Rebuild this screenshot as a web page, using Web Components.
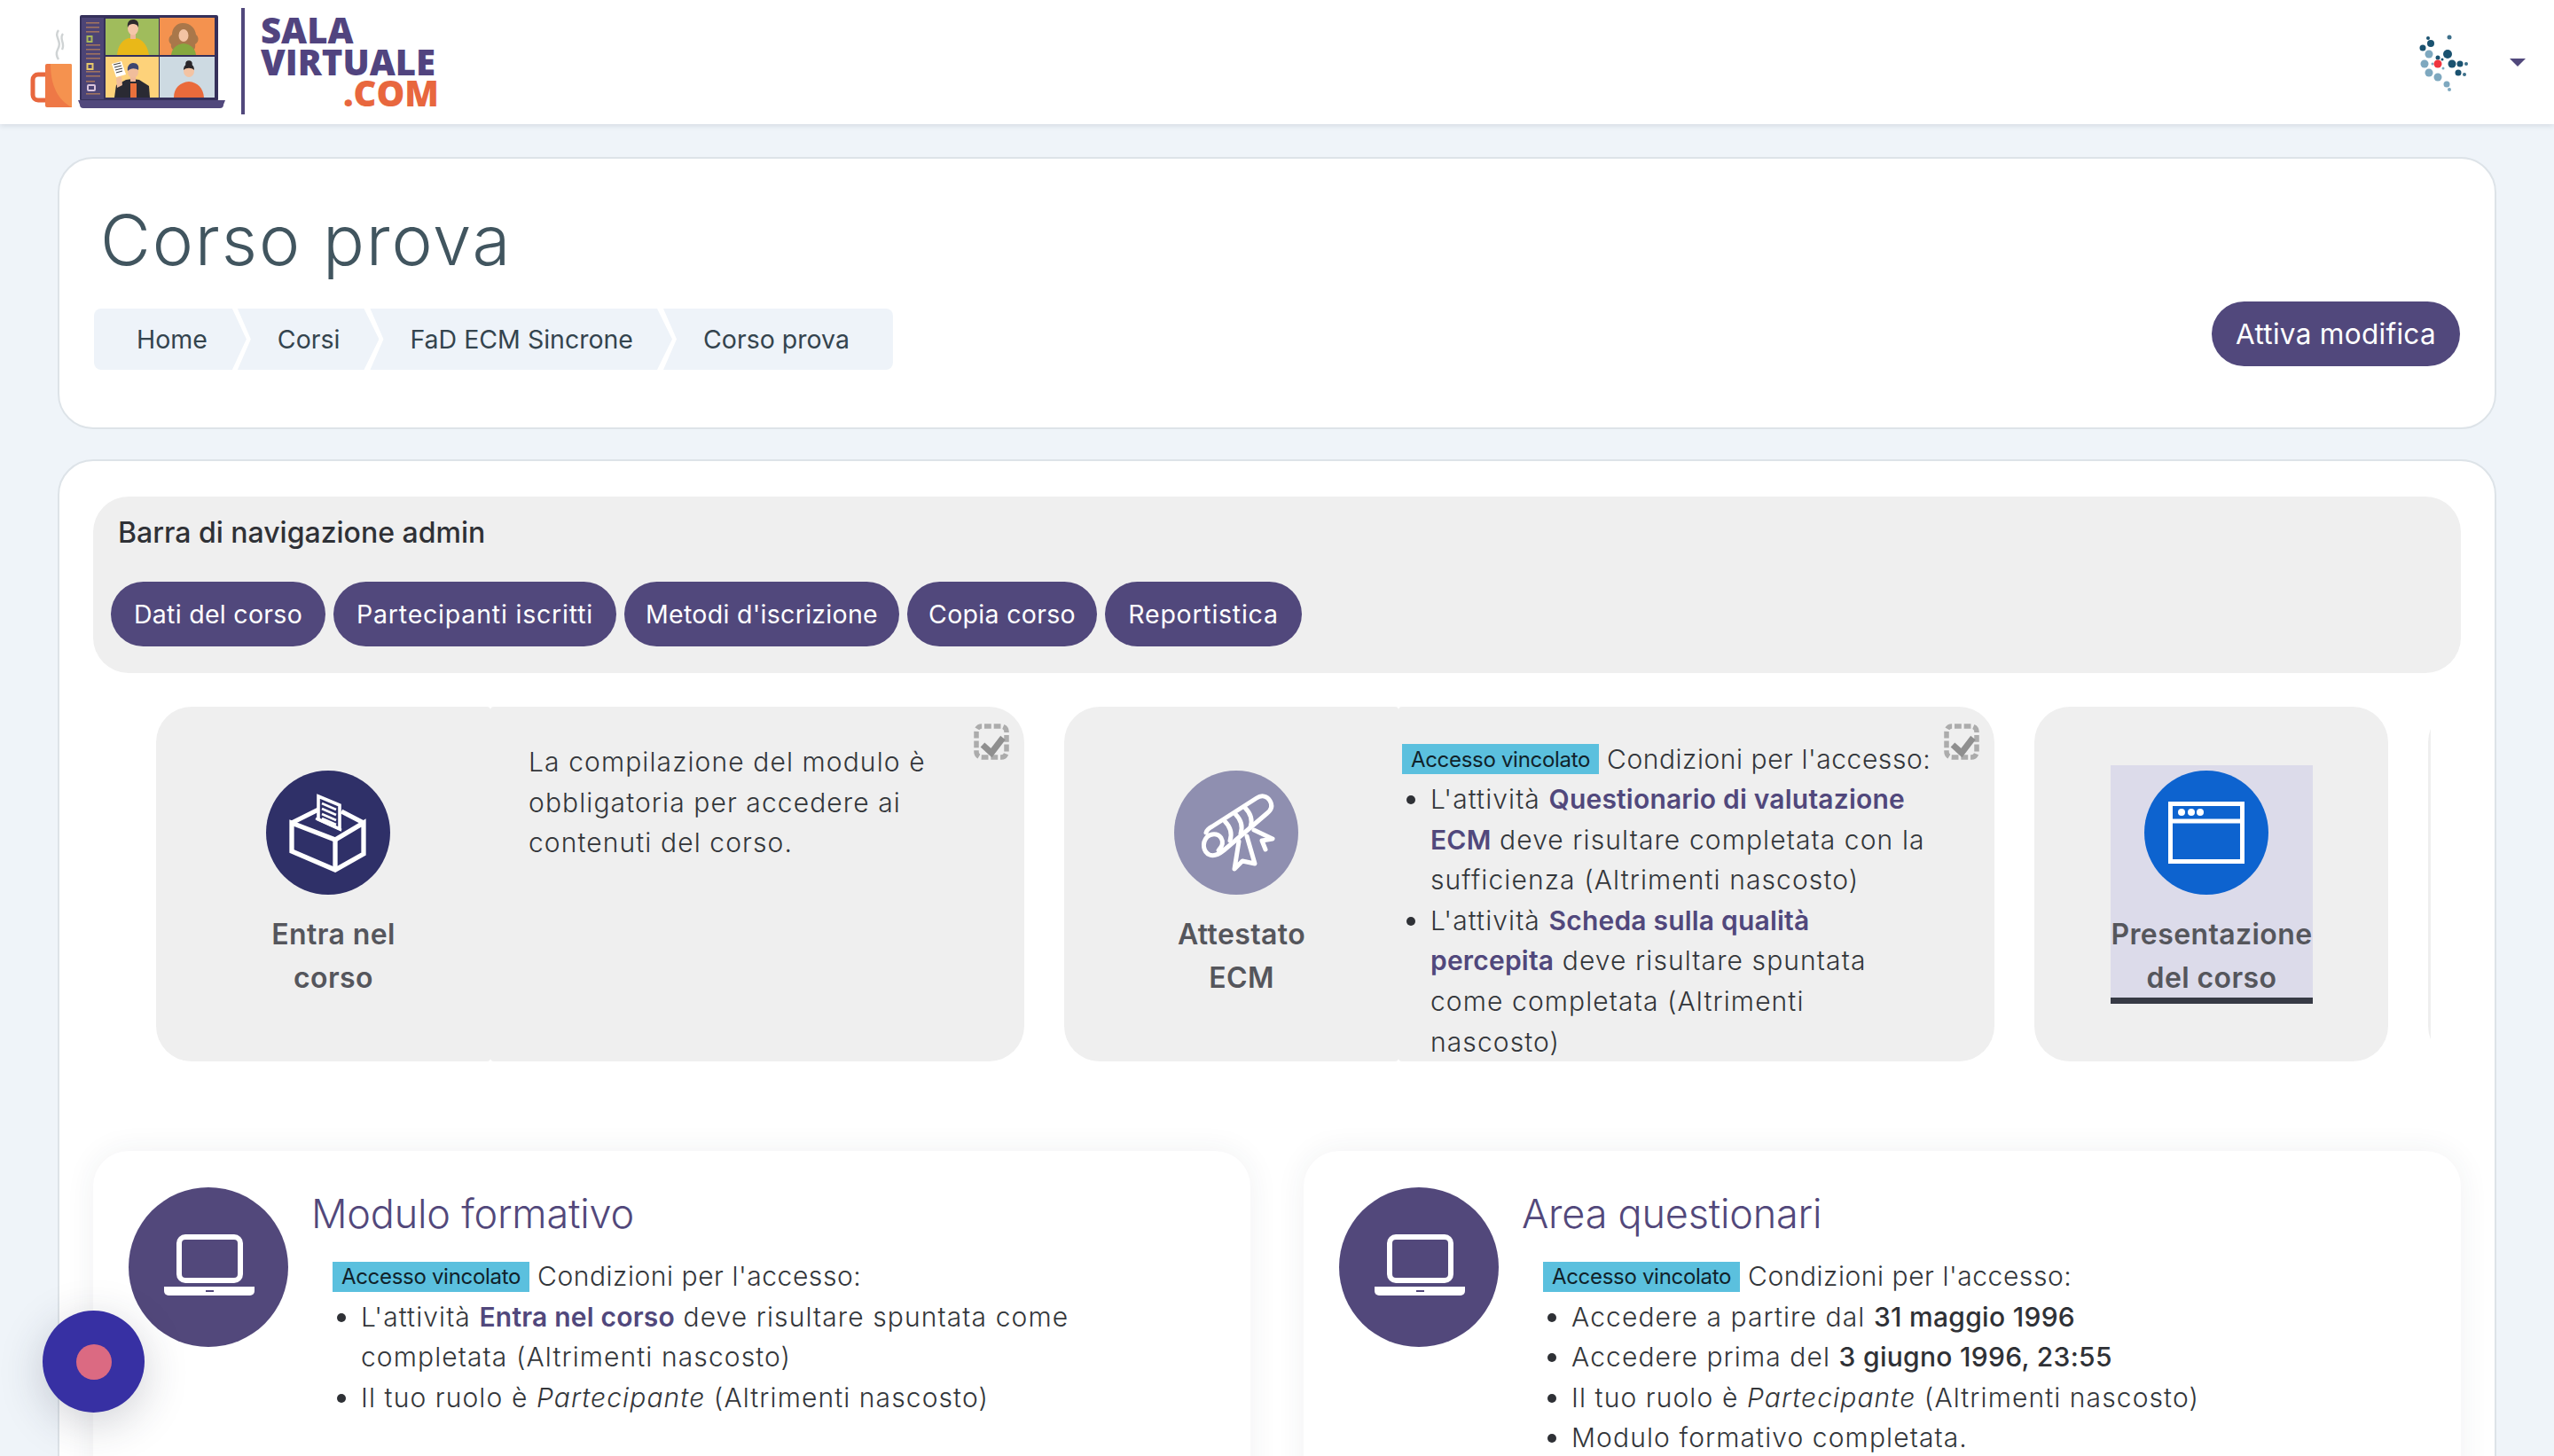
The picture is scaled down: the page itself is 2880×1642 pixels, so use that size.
<!DOCTYPE html>
<html lang="it">
<head>
<meta charset="utf-8">
<title>Corso prova</title>
<style>
  html, body { margin: 0; height: 1642px; overflow: hidden; background: #eff4f9; }
  body { font-family: Inter, "Noto Sans", sans-serif; font-size: 29.4px; color: #3b3e42; }
  sv-page { display: block; }
</style>
</head>
<body>
<sv-page>
  <sv-navbar slot="nav"></sv-navbar>

  <sv-panel slot="header" class="head">
    <sv-course-header title-text="Corso prova">
      <sv-crumb first>Home</sv-crumb>
      <sv-crumb>Corsi</sv-crumb>
      <sv-crumb>FaD ECM Sincrone</sv-crumb>
      <sv-crumb last>Corso prova</sv-crumb>
      <sv-pill slot="action" width="280" size="31.5">Attiva modifica</sv-pill>
    </sv-course-header>
  </sv-panel>

  <sv-panel slot="main">
    <sv-admin-bar heading="Barra di navigazione admin">
      <sv-pill width="242">Dati del corso</sv-pill>
      <sv-pill width="319" style="letter-spacing:.8px">Partecipanti iscritti</sv-pill>
      <sv-pill width="310">Metodi d'iscrizione</sv-pill>
      <sv-pill width="214">Copia corso</sv-pill>
      <sv-pill width="222" style="letter-spacing:.75px">Reportistica</sv-pill>
    </sv-admin-bar>

    <sv-activity-row>
      <sv-activity icon="box" color="#2f3068" width="979" check>
        <span slot="label">Entra nel<br>corso</span>
        <sv-note>La compilazione del modulo è<br>obbligatoria per accedere ai<br>contenuti del corso.</sv-note>
      </sv-activity>

      <sv-activity icon="diploma" color="#8f8fb0" width="1049" check text-pad="4">
        <span slot="label">Attestato<br>ECM</span>
        <sv-conditions>
          <sv-cond>L'attività <b>Questionario di valutazione<br>ECM</b> deve risultare completata con la<br>sufficienza (Altrimenti nascosto)</sv-cond>
          <sv-cond>L'attività <b>Scheda sulla qualità<br>percepita</b> deve risultare spuntata<br>come completata (Altrimenti<br>nascosto)</sv-cond>
        </sv-conditions>
      </sv-activity>

      <sv-activity icon="window" color="#0d63cf" width="399" active>
        <span slot="label">Presentazione<br>del corso</span>
      </sv-activity>

      <sv-activity icon="window" color="#0d63cf" width="399"></sv-activity>
    </sv-activity-row>

    <sv-section-grid>
      <sv-section-card heading="Modulo formativo">
        <sv-conditions>
          <sv-cond>L'attività <b>Entra nel corso</b> deve risultare spuntata come<br>completata (Altrimenti nascosto)</sv-cond>
          <sv-cond>Il tuo ruolo è <i>Partecipante</i> (Altrimenti nascosto)</sv-cond>
        </sv-conditions>
      </sv-section-card>
      <sv-section-card heading="Area questionari">
        <sv-conditions>
          <sv-cond plain>Accedere a partire dal <b>31 maggio 1996</b></sv-cond>
          <sv-cond plain>Accedere prima del <b>3 giugno 1996, 23:55</b></sv-cond>
          <sv-cond>Il tuo ruolo è <i>Partecipante</i> (Altrimenti nascosto)</sv-cond>
          <sv-cond>Modulo formativo completata.</sv-cond>
        </sv-conditions>
      </sv-section-card>
    </sv-section-grid>
  </sv-panel>
</sv-page>
<sv-fab></sv-fab>

<script>
class SvPage extends HTMLElement {
  constructor() {
    super();
    this.attachShadow({ mode: 'open' });
    this.shadowRoot.innerHTML = `
      <style>
        :host { display: block; }
        .stack { display: flex; flex-direction: column; gap: 34px; padding: 37px 65px 0; }
      </style>
      <slot name="nav"></slot>
      <div class="stack">
        <slot name="header"></slot>
        <slot name="main"></slot>
      </div>
    `;
  }
}

class SvNavbar extends HTMLElement {
  constructor() {
    super();
    const dots = [
      [58, 43, 2, '#1a5270'], [82, 42, 2.5, '#3c6f8a'], [61, 49, 4, '#1a5270'], [52, 54, 3.5, '#1a5270'],
      [59, 61, 4.5, '#7ea8bf'], [80, 61, 5, '#1a5270'], [69, 65, 2.5, '#1a5270'], [54, 72, 4.5, '#7ea8bf'],
      [85, 72, 4.5, '#1a5270'], [94, 72, 3.5, '#1a5270'], [101, 72, 2, '#3c6f8a'], [92, 82, 3.5, '#1a5270'],
      [99, 84, 2, '#3c6f8a'], [59, 82, 4.5, '#7ea8bf'], [69, 87, 4.5, '#7ea8bf'], [79, 95, 3.5, '#7ea8bf'],
      [82, 101, 2, '#7ea8bf'], [75, 77, 1.5, '#7ea8bf'], [63, 72, 1.5, '#7ea8bf'], [74, 67, 1.5, '#1a5270']
    ].map(d => `<circle cx="${d[0]}" cy="${d[1]}" r="${d[2]}" fill="${d[3]}"/>`).join('');
    this.attachShadow({ mode: 'open' });
    this.shadowRoot.innerHTML = `
      <style>
        :host { display: block; position: relative; height: 140px; background: #fff; box-shadow: 0 2px 6px rgba(60, 70, 90, .14); }
        .bar { display: flex; align-items: center; justify-content: space-between; height: 100%; padding-right: 32px; }
        .user { display: flex; align-items: center; gap: 30px; }
        .caret { width: 0; height: 0; border: 9px solid transparent; border-top: 9px solid #51487c; border-bottom: 0; }
        svg { display: block; }
      </style>
      <div class="bar">
        <sv-logo></sv-logo>
        <div class="user">
          <svg width="120" height="140" viewBox="0 0 120 140">${dots}
            <circle cx="69" cy="72" r="4.5" fill="#f0353f"/>
          </svg>
          <span class="caret"></span>
        </div>
      </div>
    `;
  }
}

class SvLogo extends HTMLElement {
  constructor() {
    super();
    this.attachShadow({ mode: 'open' });
    this.shadowRoot.innerHTML = `
      <style>
        :host { display: flex; align-items: flex-start; height: 140px; }
        svg { display: block; flex: none; }
        .rule { width: 4px; height: 120px; margin: 9px 0 0 0; background: #51487c; }
        .word { display: flex; flex-direction: column; margin: 16px 0 0 18px; width: 201px; font: 800 40px/35.5px "Open Sans", sans-serif; color: #51447f; }
        .com { color: #e8673e; text-align: right; }
      </style>
      <svg width="272" height="140" viewBox="0 0 272 140">
        <path d="M66 34c-6 8 5 12-1 22-2 4-1 8 1 11M71 38c-5 6 3 10-1 18" fill="none" stroke="#cfd3d4" stroke-width="2.4"/>
        <path d="M51 84H43a6 6 0 0 0-6 6v17a6 6 0 0 0 6 6h8" fill="none" stroke="#e8673e" stroke-width="5"/>
        <path d="M51 74a2 2 0 0 1 2-2h26a2 2 0 0 1 2 2v47H53a2 2 0 0 1-2-2z" fill="#ee7846"/>
        <path d="M57 72h22a2 2 0 0 1 2 2v47c-16-8-24-25-24-49z" fill="#f5924f"/>
        <rect x="90" y="17" width="156" height="97" rx="2" fill="#35305a"/>
        <rect x="92" y="20" width="25" height="92" fill="#4c4475"/>
        <g fill="#a0725f">
          <rect x="97" y="25" width="15" height="1.6"/><rect x="97" y="30" width="15" height="1.6"/><rect x="97" y="35" width="15" height="1.6"/>
          <rect x="97" y="50" width="16" height="1.6"/><rect x="97" y="55" width="16" height="1.6"/><rect x="97" y="60" width="16" height="1.6"/><rect x="97" y="65" width="16" height="1.6"/>
          <rect x="97" y="80" width="16" height="1.6"/><rect x="97" y="85" width="16" height="1.6"/><rect x="97" y="91" width="10" height="1.6"/><rect x="97" y="105" width="16" height="1.6"/>
        </g>
        <rect x="98.500" y="41" width="5" height="6" fill="none" stroke="#a8b85a" stroke-width="2"/>
        <rect x="98.500" y="72" width="6" height="6" fill="none" stroke="#e6c76a" stroke-width="2"/>
        <rect x="99" y="96" width="8" height="6" rx="1" fill="none" stroke="#d9c4dc" stroke-width="2"/>
        <rect x="119" y="21" width="60" height="41" fill="#a0bc5c"/>
        <rect x="180" y="20" width="62" height="42" fill="#f4924f"/>
        <rect x="119" y="64" width="60" height="46" fill="#fdd27a"/>
        <rect x="180" y="64" width="62" height="46" fill="#cddae2"/>
        <path d="M132 62c1-12 7-18 14-19h7c7 1 13 7 15 19z" fill="#e9b818"/>
        <rect x="147" y="36" width="6" height="8" fill="#eeb79a"/>
        <ellipse cx="150" cy="32" rx="6" ry="7.500" fill="#f5c6a8"/>
        <path d="M144 31c-1-6 2-9 6-9s7 2 6 9c-1-3-3-4-6-4s-5 1-6 4z" fill="#2d2a2c"/>
        <path d="M206 26c9 0 14 6 15 13 4 3 3 9-1 11 1 5-2 8-6 8h-14c-5-1-8-4-7-8-4-3-3-9 1-11 0-7 5-13 12-13z" fill="#a9774a"/>
        <ellipse cx="207" cy="40" rx="5.500" ry="7" fill="#f3c3a3"/>
        <path d="M193 62c1-8 6-12 14-13 8 1 13 5 14 13z" fill="#86a83f"/>
        <path d="M129 110l2-14 11-6 7-1 8 1 11 7 1 13z" fill="#2a2a33"/>
        <rect x="147" y="94" width="7" height="16" fill="#e9703c"/>
        <rect x="147" y="84" width="6" height="8" fill="#eeb79a"/>
        <ellipse cx="150" cy="81" rx="6" ry="7" fill="#f0bd9b"/>
        <path d="M144 80c-1-5 2-9 6-9 5 0 7 3 6 8-3-2-8-3-12 1z" fill="#3e4670"/>
        <path d="M126 72l11-3 5 15-11 3z" fill="#fff"/>
        <g stroke="#444" stroke-width="1.100"><path d="M128 73l8-2M129 76l8-2M130 79l8-2M131 82l7-2"/></g>
        <path d="M131 88l6-2 1 10-6 3z" fill="#f0bd9b"/>
        <circle cx="213" cy="72" r="3.800" fill="#29262a"/>
        <ellipse cx="213" cy="80" rx="6" ry="7" fill="#f3c3a3"/>
        <path d="M207 79c0-5 3-7 6-7s6 2 6 7c-3-3-9-3-12 0z" fill="#29262a"/>
        <path d="M196 110c0-11 7-17 17-18 10 1 16 7 17 18z" fill="#ea6a3b"/>
        <path d="M88 113h166l-2 5a4 4 0 0 1-4 4H94a4 4 0 0 1-4-4z" fill="#51487c"/>
      </svg>
      <div class="rule"></div>
      <div class="word"><span>SALA</span><span>VIRTUALE</span><span class="com">.COM</span></div>
    `;
  }
}

class SvPanel extends HTMLElement {
  constructor() {
    super();
    this.attachShadow({ mode: 'open' });
    this.shadowRoot.innerHTML = `
      <style>
        :host { display: block; box-sizing: border-box; padding: 40px 38px 60px; background: #fff; border: 2px solid #dde3e8; border-radius: 40px; }
        :host(.head) { padding: 47px 39px 65px; }
      </style>
      <slot></slot>
    `;
  }
}

class SvCourseHeader extends HTMLElement {
  constructor() {
    super();
    this.attachShadow({ mode: 'open' });
    this.shadowRoot.innerHTML = `
      <style>
        :host { display: block; }
        h1 { margin: 0 0 24px 7px; font: 300 78px/90px Inter, sans-serif; color: #41555f; letter-spacing: 1.9px; }
        .row { display: flex; align-items: flex-end; justify-content: space-between; }
        .crumbs { display: flex; }
        .action { display: flex; margin-bottom: 4px; }
      </style>
      <h1></h1>
      <div class="row">
        <nav class="crumbs"><slot></slot></nav>
        <div class="action"><slot name="action"></slot></div>
      </div>
    `;
    this.shadowRoot.querySelector('h1').textContent = this.getAttribute('title-text');
  }
}

class SvCrumb extends HTMLElement {
  constructor() {
    super();
    this.attachShadow({ mode: 'open' });
    this.shadowRoot.innerHTML = `
      <style>
        :host { display: flex; align-items: center; height: 69px; padding: 0 44px 0 45px; margin-left: -10px; background: #eef3f9; color: #34444e; font: 400 28.5px Inter, sans-serif; white-space: nowrap;
          clip-path: polygon(0 0, calc(100% - 17px) 0, 100% 50%, calc(100% - 17px) 100%, 0 100%, 15px 50%); }
        :host([first]) { margin-left: 0; padding-left: 48px; border-radius: 8px 0 0 8px; clip-path: polygon(0 0, calc(100% - 16px) 0, 100% 50%, calc(100% - 16px) 100%, 0 100%); }
        :host([last]) { padding-right: 49px; border-radius: 0 8px 8px 0; clip-path: polygon(0 0, 100% 0, 100% 100%, 0 100%, 15px 50%); }
      </style>
      <slot></slot>
    `;
  }
}

class SvPill extends HTMLElement {
  constructor() {
    super();
    this.attachShadow({ mode: 'open' });
    this.shadowRoot.innerHTML = `
      <style>
        :host { display: inline-flex; align-items: center; justify-content: center; box-sizing: border-box; height: 73px; border-radius: 37px; background: #51487c; color: #fff; font: 400 28.5px Inter, sans-serif; letter-spacing: 0.3px; white-space: nowrap; }
      </style>
      <slot></slot>
    `;
    this.style.width = this.getAttribute('width') + 'px';
    if (this.hasAttribute('size')) this.style.fontSize = this.getAttribute('size') + 'px';
  }
}

class SvAdminBar extends HTMLElement {
  constructor() {
    super();
    this.attachShadow({ mode: 'open' });
    this.shadowRoot.innerHTML = `
      <style>
        :host { display: block; box-sizing: border-box; height: 199px; padding: 20px 20px 30px; background: #efefef; border-radius: 40px; }
        h2 { margin: 0 0 34px 8px; font: 500 32px/42px Inter, sans-serif; color: #2f3136; }
        .pills { display: flex; gap: 9px; }
      </style>
      <h2></h2>
      <div class="pills"><slot></slot></div>
    `;
    this.shadowRoot.querySelector('h2').textContent = this.getAttribute('heading');
  }
}

class SvActivityRow extends HTMLElement {
  constructor() {
    super();
    this.attachShadow({ mode: 'open' });
    this.shadowRoot.innerHTML = `
      <style>
        :host { display: block; margin: 38px 0 0 71px; width: 2565px; overflow: hidden; }
        .row { display: flex; gap: 45px; width: max-content; }
      </style>
      <div class="row"><slot></slot></div>
    `;
  }
}

const ACTIVITY_ICONS = {
  box: `<g fill="none" stroke="#fff" stroke-width="5.300" stroke-linejoin="miter">
      <path d="M29 59l30-15M110 59L85 46"/>
      <path d="M29 59v32l49 21 32-18V59L78 78z"/><path d="M78 78v34"/></g>
      <path d="M59 29l24 10v27l-24-11z" fill="#2f3068" stroke="#fff" stroke-width="3.600"/>
      <path d="M56 54l29 13" stroke="#fff" stroke-width="2.600"/>
      <path d="M63 37l16 7M63 43l16 7M63 49l16 7M63 54l16 7" stroke="#fff" stroke-width="2.600"/>`,
  diploma: `<g fill="none" stroke="#fff" stroke-width="5" stroke-linecap="round" stroke-linejoin="round">
      <path d="M36 70c1-3 3-5 7-7l50-32c6-4 12-2 15 3s2 10-3 14L56 90c-5 4-11 7-16 5-7-3-9-13-3-20 4-4 12-5 16 1 3 5 1 10-3 14"/>
      <path d="M57 57c6 6 9 13 6 22M69 49c6 6 9 13 6 22M80 42c6 6 9 13 6 22"/>
      <path d="M73 80l-5 31 9-9 14 3-9-31"/><path d="M90 67l21 10-12 2 4 10"/></g>`,
  window: `<rect x="29.500" y="37.500" width="81" height="65" fill="none" stroke="#fff" stroke-width="5"/>
      <path d="M27 57h86" stroke="#fff" stroke-width="5"/>
      <circle cx="42" cy="47" r="4" fill="#fff"/><circle cx="53" cy="47" r="4" fill="#fff"/><circle cx="63" cy="47" r="4" fill="#fff"/>`
};

class SvActivity extends HTMLElement {
  constructor() {
    super();
    const color = this.getAttribute('color');
    const hasCheck = this.hasAttribute('check');
    this.attachShadow({ mode: 'open' });
    this.shadowRoot.innerHTML = `
      <style>
        :host { display: flex; flex: none; position: relative; height: 400px; }
        .left, .right { background: #efefef; }
        .left { display: flex; flex: none; align-items: center; box-sizing: border-box; width: 377px; padding-left: 86px; border-radius: 40px 4px 4px 40px; }
        :host(:not([check])) .left { width: 100%; border-radius: 40px; }
        .right { flex: 1; box-sizing: border-box; padding-top: 36.5px; overflow: hidden; border-radius: 4px 40px 40px 4px; font: 300 30px/45.6px Inter, sans-serif; letter-spacing: 1.1px; color: #33363a; white-space: nowrap; }
        :host(:not([check])) .right { display: none; }
        .tile { box-sizing: border-box; flex: none; width: 228px; padding: 6px 0 0; border-bottom: 7px solid transparent; }
        :host([active]) .tile { background: #dcdbea; border-bottom-color: #373a45; }
        .disc { display: block; width: 140px; height: 140px; margin: 0 0 20px 38px; border-radius: 50%; }
        .label { font: 600 32px/49px Inter, sans-serif; letter-spacing: 0.4px; color: #55565c; text-align: center; white-space: nowrap; height: 96px; }
        .check { position: absolute; top: 19px; right: 17px; }
      </style>
      <div class="left">
        <div class="tile">
          <svg class="disc" viewBox="0 0 140 140" style="background:${color}">${ACTIVITY_ICONS[this.getAttribute('icon')]}</svg>
          <div class="label"><slot name="label"></slot></div>
        </div>
      </div>
      <div class="right" style="padding-left:${this.getAttribute('text-pad') || 43}px"><slot></slot></div>
      ${hasCheck ? `<svg class="check" width="40" height="41" viewBox="0 0 40 41">
        <rect x="3" y="3" width="34" height="35" rx="6" fill="none" stroke="#acacac" stroke-width="5.500" stroke-dasharray="7.800 2.900" stroke-dashoffset="-3"/>
        <path d="M10 24l10 9 13-17" fill="none" stroke="#8f8f8f" stroke-width="7"/></svg>` : ''}
    `;
    this.style.width = this.getAttribute('width') + 'px';
  }
}

class SvNote extends HTMLElement {
  constructor() {
    super();
    this.attachShadow({ mode: 'open' });
    this.shadowRoot.innerHTML = `
      <style>:host { display: block; padding-top: 3.5px; }</style>
      <slot></slot>
    `;
  }
}

class SvConditions extends HTMLElement {
  constructor() {
    super();
    this.attachShadow({ mode: 'open' });
    this.shadowRoot.innerHTML = `
      <style>
        :host { display: block; }
        .intro { display: flex; align-items: center; gap: 9px; height: 45.6px; letter-spacing: 0.55px; }
        .badge { display: inline-flex; align-items: center; justify-content: center; box-sizing: border-box; flex: none; width: 222px; height: 34px; background: #5bc0de; color: #10222a; font: 400 24px Inter, sans-serif; letter-spacing: -0.3px; }
      </style>
      <div class="intro"><span class="badge">Accesso vincolato</span><span>Condizioni per l'accesso:</span></div>
      <slot></slot>
    `;
  }
}

class SvCond extends HTMLElement {
  constructor() {
    super();
    this.attachShadow({ mode: 'open' });
    this.shadowRoot.innerHTML = `
      <style>
        :host { display: block; position: relative; padding-left: 32px; }
        :host::before { content: ""; position: absolute; left: 5px; top: 18px; width: 10px; height: 10px; border-radius: 50%; background: #2f3136; }
        ::slotted(b) { font-weight: 600; color: #51487c; letter-spacing: 0.2px; }
        :host([plain]) ::slotted(b) { color: #2f3136; font-weight: 500; letter-spacing: 0.3px; }
        ::slotted(i) { font-style: italic; }
      </style>
      <slot></slot>
    `;
  }
}

class SvSectionGrid extends HTMLElement {
  constructor() {
    super();
    this.attachShadow({ mode: 'open' });
    this.shadowRoot.innerHTML = `
      <style>
        :host { display: grid; grid-template-columns: 1fr 1fr; gap: 60px; margin-top: 101px; }
      </style>
      <slot></slot>
    `;
  }
}

class SvSectionCard extends HTMLElement {
  constructor() {
    super();
    this.attachShadow({ mode: 'open' });
    this.shadowRoot.innerHTML = `
      <style>
        :host { display: flex; gap: 26px; box-sizing: border-box; min-height: 440px; padding: 41px 40px 40px; background: #fff; border-radius: 40px; box-shadow: 0 0 34px rgba(40, 50, 70, .07); font: 300 30px/45.6px Inter, sans-serif; letter-spacing: 1.1px; color: #33363a; white-space: nowrap; }
        svg { display: block; flex: none; width: 180px; height: 180px; border-radius: 50%; background: #52487b; }
        h3 { margin: 4px 0 22px; font: 300 45px/52px Inter, sans-serif; color: #52487b; letter-spacing: -0.2px; }
        .body { padding-left: 24px; }
      </style>
      <svg viewBox="0 0 180 180">
        <rect x="57" y="56" width="69" height="49" rx="7" fill="none" stroke="#fff" stroke-width="6"/>
        <path d="M40 112h102v5a5 5 0 0 1-5 5H45a5 5 0 0 1-5-5z" fill="#fff"/>
        <rect x="87" y="116" width="9" height="2" fill="#52487b"/>
      </svg>
      <div>
        <h3></h3>
        <div class="body"><slot></slot></div>
      </div>
    `;
    this.shadowRoot.querySelector('h3').textContent = this.getAttribute('heading');
  }
}

class SvFab extends HTMLElement {
  constructor() {
    super();
    this.attachShadow({ mode: 'open' });
    this.shadowRoot.innerHTML = `
      <style>
        :host { position: fixed; left: 48px; top: 1478px; display: flex; align-items: center; justify-content: center; width: 115px; height: 115px; border-radius: 50%; background: #3730a3; box-shadow: 0 12px 50px rgba(40, 45, 70, .22); }
        span { width: 40px; height: 40px; border-radius: 50%; background: #db6a82; }
      </style>
      <span></span>
    `;
  }
}

customElements.define('sv-page', SvPage);
customElements.define('sv-navbar', SvNavbar);
customElements.define('sv-logo', SvLogo);
customElements.define('sv-panel', SvPanel);
customElements.define('sv-course-header', SvCourseHeader);
customElements.define('sv-crumb', SvCrumb);
customElements.define('sv-pill', SvPill);
customElements.define('sv-admin-bar', SvAdminBar);
customElements.define('sv-activity-row', SvActivityRow);
customElements.define('sv-activity', SvActivity);
customElements.define('sv-note', SvNote);
customElements.define('sv-conditions', SvConditions);
customElements.define('sv-cond', SvCond);
customElements.define('sv-section-grid', SvSectionGrid);
customElements.define('sv-section-card', SvSectionCard);
customElements.define('sv-fab', SvFab);
</script>
</body>
</html>
